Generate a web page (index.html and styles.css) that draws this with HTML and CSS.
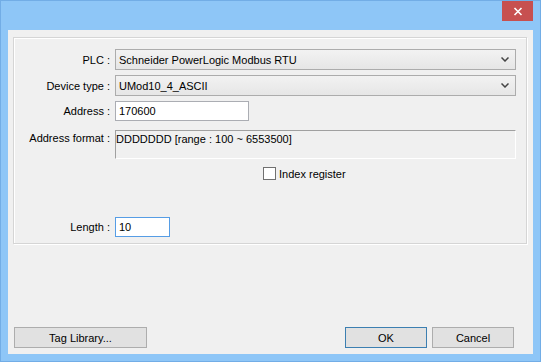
FILE: index.html
```html
<!DOCTYPE html>
<html lang="en">
<head>
  <meta charset="UTF-8" />
  <title>Address</title>
  <link rel="stylesheet" href="styles.css">
</head>
<body>
  <div class="window">
    <div class="titlebar">
      <div class="close">
        <svg width="10" height="9" viewBox="0 0 10 9">
          <path d="M1.5 1 L8.5 8 M8.5 1 L1.5 8" stroke="#fff" stroke-width="1.6" fill="none" />
        </svg>
      </div>
    </div>
    <div class="client">
      <div class="group">
        <div class="row row-plc">
          <label>PLC :</label>
          <div class="combo">
            <span>Schneider PowerLogic Modbus RTU</span>
            <svg width="8" height="5" viewBox="0 0 8 5"><path d="M0.5 0.5 L4 4 L7.5 0.5" stroke="#444" stroke-width="1.5" fill="none" /></svg>
          </div>
        </div>
        <div class="row row-device">
          <label>Device type :</label>
          <div class="combo">
            <span>UMod10_4_ASCII</span>
            <svg width="8" height="5" viewBox="0 0 8 5"><path d="M0.5 0.5 L4 4 L7.5 0.5" stroke="#444" stroke-width="1.5" fill="none" /></svg>
          </div>
        </div>
        <div class="row row-address">
          <label>Address :</label>
          <div class="edit edit-address">170600</div>
        </div>
        <div class="row row-format">
          <label>Address format :</label>
          <div class="readonly">DDDDDDD [range : 100 ~ 6553500]</div>
        </div>
        <div class="row row-check">
          <span class="checkbox"></span>
          <span>Index register</span>
        </div>
        <div class="row row-length">
          <label>Length :</label>
          <div class="edit edit-length">10</div>
        </div>
      </div>
      <div class="buttons">
        <div class="btn btn-tag">Tag Library...</div>
        <div class="spacer"></div>
        <div class="btn btn-default">OK</div>
        <div class="btn">Cancel</div>
      </div>
    </div>
  </div>
</body>
</html>
```
FILE: styles.css
```css
body {
  margin: 0;
  font-family: "Liberation Sans", Arial, sans-serif;
  font-size: 11px;
  color: #000;
  background: #fff;
}
.window {
  width: 541px;
  height: 362px;
  box-sizing: border-box;
  background: #8ec6f7;
  border: 1px solid #72ade6;
}
.titlebar {
  height: 29px;
  display: flex;
  justify-content: flex-end;
  padding-right: 7px;
}
.close {
  width: 31px;
  height: 20px;
  background: #c75050;
  display: flex;
  align-items: center;
  justify-content: center;
}
.client {
  margin: 0 7px;
  height: 324px;
  box-sizing: border-box;
  background: #f0f0f0;
  padding: 7px 6px 0 5px;
}
.group {
  height: 207px;
  box-sizing: border-box;
  border: 1px solid #d5d5d5;
  box-shadow: inset 1px 1px 0 #fff, 1px 1px 0 #fff;
  padding: 11px 10px 6px 0;
}
.row {
  display: flex;
  align-items: center;
}
.row label {
  width: 96px;
  margin-right: 5px;
  text-align: right;
  white-space: nowrap;
}
.combo {
  flex: 1;
  height: 21px;
  box-sizing: border-box;
  border: 1px solid #acacac;
  background: linear-gradient(#f2f2f2, #e6e6e6);
  display: flex;
  align-items: center;
  justify-content: space-between;
  padding: 0 6px 0 3px;
}
.row-device {
  margin-top: 5px;
}
.row-address {
  margin-top: 5px;
}
.edit {
  height: 20px;
  box-sizing: border-box;
  background: #fff;
  border: 1px solid #abadb3;
  display: flex;
  align-items: center;
  padding-left: 3px;
}
.edit-address {
  width: 134px;
}
.row-format {
  margin-top: 9px;
  align-items: flex-start;
}
.row-format label {
  padding-top: 2px;
}
.readonly {
  flex: 1;
  height: 29px;
  box-sizing: border-box;
  border: 1px solid #fff;
  border-top-color: #a0a0a0;
  border-left-color: #a0a0a0;
  padding: 2px 0 0 0;
}
.row-check {
  margin-top: 8px;
  height: 13px;
  padding-left: 249px;
}
.checkbox {
  width: 13px;
  height: 13px;
  box-sizing: border-box;
  border: 1px solid #707070;
  background: #fff;
  margin-right: 3px;
}
.row-length {
  margin-top: 37px;
}
.edit-length {
  width: 55px;
  border-color: #569de5;
}
.buttons {
  display: flex;
  margin-top: 83px;
  padding-left: 1px;
  padding-right: 13px;
  gap: 5px;
}
.spacer {
  flex: 1;
}
.btn {
  width: 82px;
  height: 21px;
  box-sizing: border-box;
  border: 1px solid #adadad;
  background: #e1e1e1;
  display: flex;
  align-items: center;
  justify-content: center;
}
.btn-tag {
  width: 133px;
}
.btn-default {
  border-color: #3c7fb1;
}
```
